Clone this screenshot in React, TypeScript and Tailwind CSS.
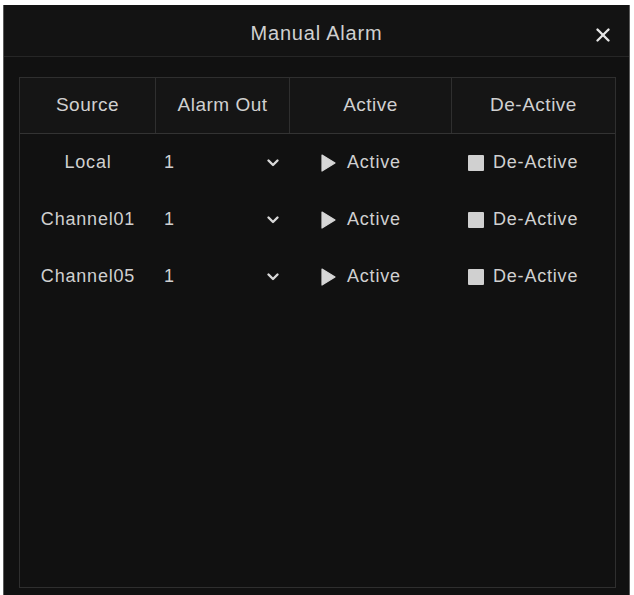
import { X } from 'lucide-react'

const rows = ['Local', 'Channel01', 'Channel05']

function Chevron() {
  return (
    <svg width="14" height="10" viewBox="0 0 14 10" className="text-[#d8d8d8]">
      <path d="M2.5 2.5 L7 7 L11.5 2.5" fill="none" stroke="currentColor" strokeWidth="2.4" strokeLinecap="round" strokeLinejoin="round" />
    </svg>
  )
}

function Play() {
  return (
    <svg width="15" height="18" viewBox="0 0 15 18" className="text-[#d6d6d6]">
      <path d="M1 1 L14 9 L1 17 Z" fill="currentColor" stroke="currentColor" strokeWidth="1.2" strokeLinejoin="round" />
    </svg>
  )
}

export default function App() {
  return (
    <div
      className="w-[634px] h-[595px] bg-white pl-[3px] pt-[5px] overflow-hidden"
      style={{ fontFamily: '"Liberation Sans", Arial, sans-serif' }}
    >
      <div className="w-[627px] h-[590px] bg-[#111111] border-l border-r border-[#5a5a5a] flex flex-col text-[#d0d0d0]">
        <div className="h-[52px] shrink-0 relative flex items-center justify-center pt-[5px] border-b border-[#262626] bg-[#131313]">
          <span className="text-[20px] tracking-[0.8px]">Manual Alarm</span>
          <X size={22} strokeWidth={2.6} className="absolute right-[15px] top-[19px] text-[#e6e6e6]" />
        </div>

        <div className="flex-1 pt-[20px] pl-[15px] pr-[13px] pb-[7px] flex">
          <div className="flex-1 border border-[#2f2f2f] flex flex-col">
            <div className="h-[56px] flex border-b border-[#333333] bg-[#151515] text-[19px] tracking-[0.5px]">
              <div className="w-[136px] flex items-center justify-center border-r border-[#2f2f2f]">Source</div>
              <div className="w-[134px] flex items-center justify-center border-r border-[#2f2f2f]">Alarm Out</div>
              <div className="w-[162px] flex items-center justify-center border-r border-[#2f2f2f]">Active</div>
              <div className="flex-1 flex items-center justify-center">De-Active</div>
            </div>

            {rows.map((name) => (
              <div key={name} className="h-[57px] flex items-center text-[18px] tracking-[0.8px]">
                <div className="w-[136px] flex justify-center">{name}</div>
                <div className="w-[134px] flex items-center justify-between pl-[8px] pr-[10px]">
                  <span>1</span>
                  <Chevron />
                </div>
                <div className="w-[162px] flex items-center gap-[11px] pl-[31px]">
                  <Play />
                  <span>Active</span>
                </div>
                <div className="flex-1 flex items-center gap-[9px] pl-[16px]">
                  <span className="w-[16px] h-[16px] bg-[#d0d0d0] rounded-[1px]" />
                  <span>De-Active</span>
                </div>
              </div>
            ))}
          </div>
        </div>
      </div>
    </div>
  )
}
